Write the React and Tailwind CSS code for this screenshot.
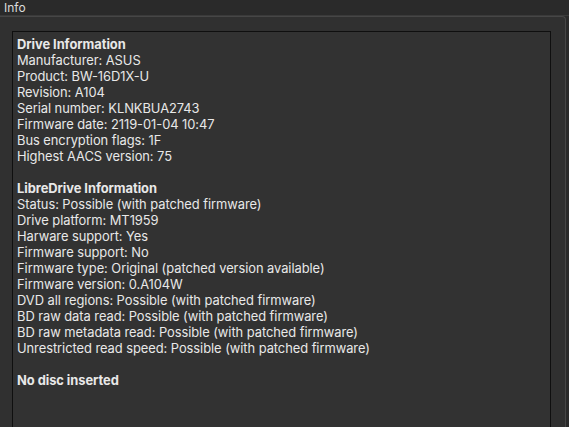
const driveLines = [
  "Manufacturer: ASUS",
  "Product: BW-16D1X-U",
  "Revision: A104",
  "Serial number: KLNKBUA2743",
  "Firmware date: 2119-01-04 10:47",
  "Bus encryption flags: 1F",
  "Highest AACS version: 75",
];

const libreLines = [
  "Status: Possible (with patched firmware)",
  "Drive platform: MT1959",
  "Harware support: Yes",
  "Firmware support: No",
  "Firmware type: Original (patched version available)",
  "Firmware version: 0.A104W",
  "DVD all regions: Possible (with patched firmware)",
  "BD raw data read: Possible (with patched firmware)",
  "BD raw metadata read: Possible (with patched firmware)",
  "Unrestricted read speed: Possible (with patched firmware)",
];

export default function App() {
  return (
    <div className="w-[569px] h-[427px] overflow-hidden bg-[#2a2a2a] text-[#e8e8e8] font-['Inter','Liberation_Sans',sans-serif] flex flex-col">
      <div className="h-[16px] shrink-0 px-[4px] text-[12px] leading-[15px] text-[#dcdcdc] border-b border-[#3a3a3a]">
        Info
      </div>
      <div className="flex-1 mr-[3px] bg-[#303030] border-t border-r border-[#464646] rounded-tr-[4px] pl-[12px] pr-[14px] pt-[14px] flex">
        <div className="flex-1 bg-[#323232] border border-[#0f0f0f] border-b-0 px-[4px] pt-[5px] text-[12.9px] tracking-[-0.05px] leading-[16px]">
          <div className="font-bold">Drive Information</div>
          {driveLines.map((l) => (
            <div key={l}>{l}</div>
          ))}
          <div className="h-[16px]" />
          <div className="font-bold">LibreDrive Information</div>
          {libreLines.map((l) => (
            <div key={l}>{l}</div>
          ))}
          <div className="h-[16px]" />
          <div className="font-bold">No disc inserted</div>
        </div>
      </div>
    </div>
  );
}
